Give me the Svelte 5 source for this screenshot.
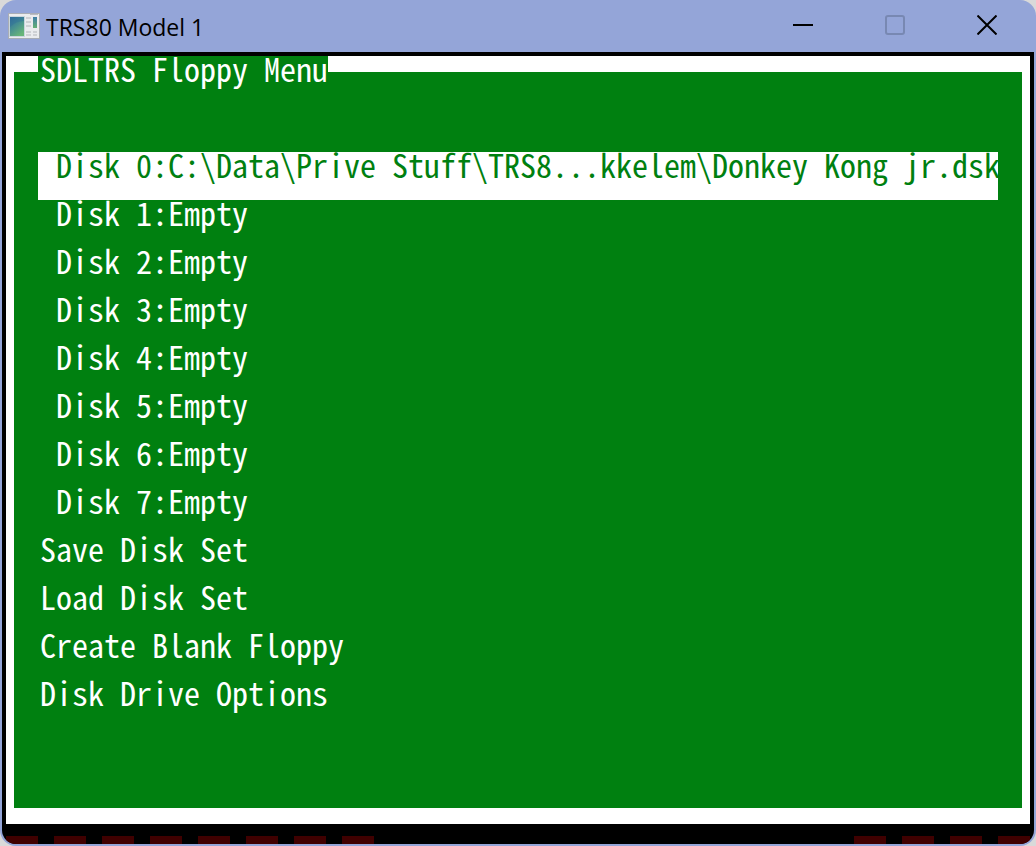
<script>
  const disks = [
    'C:\\Data\\Prive Stuff\\TRS8...kkelem\\Donkey Kong jr.dsk',
    'Empty', 'Empty', 'Empty', 'Empty', 'Empty', 'Empty', 'Empty'
  ];
  const actions = ['Save Disk Set', 'Load Disk Set', 'Create Blank Floppy', 'Disk Drive Options'];
  const items = [...disks.map((name, i) => ` Disk ${i}:${name}`), ...actions];
  let selected = $state(0);
</script>

<div class="window">
  <header>
    <svg class="app-icon" width="32" height="26" viewBox="0 0 32 26" aria-hidden="true">
      <defs>
        <linearGradient id="pane" x1="0" y1="0" x2="0.6" y2="1">
          <stop offset="0" stop-color="#2f6a9a" />
          <stop offset="0.5" stop-color="#458d92" />
          <stop offset="1" stop-color="#68b578" />
        </linearGradient>
        <linearGradient id="strip" x1="0" y1="0" x2="0" y2="1">
          <stop offset="0" stop-color="#3f7fa8" />
          <stop offset="1" stop-color="#63b072" />
        </linearGradient>
      </defs>
      <rect x="0.5" y="0.5" width="31" height="25" fill="#ebecee" stroke="#a9adb5" />
      <path d="M22 1.500h8" stroke="#b9bcc2" />
      <rect x="1.500" y="3.500" width="15" height="20" fill="url(#pane)" stroke="#c9d6dc" />
      <path d="M2 14 Q8 8 16 8 V4 H2Z" fill="#2c6a9c" opacity="0.35" />
      <path d="M18 5h5M18 9h5M18 13h5M18 19h5M18 22h5M25 19h4M25 22h4" stroke="#cfd1d4" stroke-width="2" />
      <rect x="25" y="4" width="4" height="11" fill="url(#strip)" />
    </svg>
    <h1>TRS80 Model 1</h1>
    <div class="controls">
      <button aria-label="Minimize">
        <svg width="20" height="20" viewBox="0 0 20 20"><path d="M0 10h20" stroke="#000" stroke-width="2" /></svg>
      </button>
      <button aria-label="Maximize" disabled>
        <svg width="20" height="20" viewBox="0 0 20 20"><rect x="1" y="1" width="18" height="18" rx="2" fill="none" stroke="#7888b2" stroke-width="2" /></svg>
      </button>
      <button aria-label="Close">
        <svg width="20" height="20" viewBox="0 0 20 20"><path d="M0.500 0.500l19 19M19.500 0.500l-19 19" stroke="#000" stroke-width="2" /></svg>
      </button>
    </div>
  </header>

  <main>
    <section class="frame">
      <div class="panel">
        <h2>SDLTRS Floppy Menu</h2>
        <div class="menu">
          {#each items as item, i}
            <button class:selected={selected === i} onclick={() => (selected = i)}>{item}</button>
          {/each}
        </div>
      </div>
    </section>
    <div class="leds">
      <div class="left"></div>
      <div class="right"></div>
    </div>
  </main>
</div>

<style>
  :global(body) {
    background: #d9d9d9;
  }
  .window {
    box-sizing: border-box;
    display: flex;
    flex-direction: column;
    min-height: 100vh;
    padding: 0 2px 2px;
    border-radius: 16px;
    background: #94a5d8;
  }
  header {
    display: flex;
    align-items: center;
    height: 52px;
    padding: 0 1px 0 6px;
  }
  h1 {
    flex: 1;
    margin: 2px 0 0 6px;
    font: 400 23px/32px "Open Sans", "Noto Sans", sans-serif;
    color: #000;
  }
  .controls {
    display: flex;
  }
  .controls button {
    display: grid;
    place-items: center;
    width: 92px;
    height: 50px;
    padding: 0 0 2px;
    border: 0;
    background: none;
  }
  .controls svg {
    display: block;
  }
  main {
    flex: 1;
    display: flex;
    flex-direction: column;
    padding: 4px 4px 0;
    border-radius: 0 0 14px 14px;
    background: #000;
    overflow: hidden;
  }
  .frame {
    flex: 1;
    display: flex;
    padding: 16px 8px;
    background: #fff;
  }
  .panel {
    flex: 1;
    min-width: 0;
    padding: 0 24px 80px;
    background: #008010;
  }
  h2,
  .menu button {
    font-family: "Noto Sans CJK JP", "Liberation Mono", monospace;
    font-size: 32px;
    font-weight: 400;
    line-height: 24px;
    font-feature-settings: "hwid";
    font-variant-ligatures: none;
    text-indent: 2px;
    white-space: pre;
    color: #fff;
  }
  h2 {
    width: fit-content;
    margin: -16px 0 64px;
    padding-bottom: 8px;
    background: #008010;
  }
  .menu {
    display: flex;
    flex-direction: column;
  }
  .menu button {
    height: 48px;
    padding: 0 0 24px;
    border: 0;
    background: none;
    text-align: left;
  }
  .menu button.selected {
    background: #fff;
    color: #008010;
  }
  .leds {
    display: flex;
    justify-content: space-between;
    height: 8px;
    margin-top: 12px;
  }
  .leds div {
    background: repeating-linear-gradient(to right, #400000 0 32px, transparent 32px 48px);
  }
  .left {
    width: 368px;
  }
  .right {
    width: 176px;
  }
</style>
